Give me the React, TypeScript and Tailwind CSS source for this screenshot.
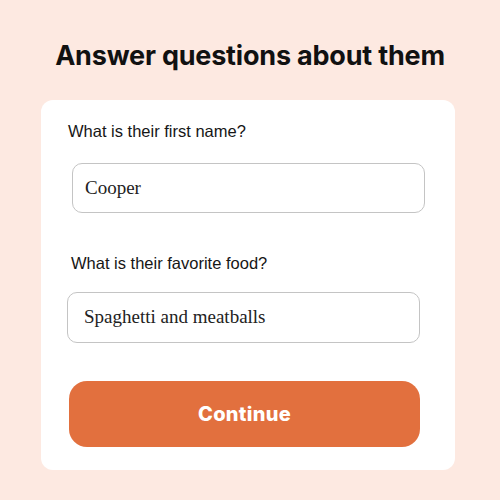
export default function App() {
  return (
    <div className="w-[500px] h-[500px] bg-[#fde9e1] flex flex-col items-center pt-[38px]">
      <h1 className="text-[27px] leading-[36px] font-bold text-[#111111] font-['Inter',sans-serif] tracking-[-0.2px]">
        Answer questions about them
      </h1>
      <div className="mt-[26px] w-[414px] h-[370px] ml-[-4px] bg-white rounded-[12px] flex flex-col pl-[27px] pt-[21px]">
        <label className="text-[16.5px] leading-[20px] text-[#161616] font-['Liberation_Sans',sans-serif]">
          What is their first name?
        </label>
        <div className="mt-[22px] ml-[4px] w-[353px] h-[50px] rounded-[10px] border border-[#c4c4c4] flex items-center pl-[12px]">
          <span className="text-[19px] text-[#222] font-['Liberation_Serif',serif]">Cooper</span>
        </div>
        <label className="mt-[40px] ml-[3px] text-[16.5px] leading-[20px] text-[#161616] font-['Liberation_Sans',sans-serif]">
          What is their favorite food?
        </label>
        <div className="mt-[19px] ml-[-1px] w-[353px] h-[51px] rounded-[10px] border border-[#c4c4c4] flex items-center pl-[16px]">
          <span className="text-[19px] text-[#222] font-['Liberation_Serif',serif]">Spaghetti and meatballs</span>
        </div>
        <button className="mt-[38px] ml-[1px] w-[351px] h-[66px] rounded-[18px] bg-[#e2703e] text-white text-[20px] font-extrabold font-['Inter',sans-serif] tracking-[0.3px]">
          Continue
        </button>
      </div>
    </div>
  );
}
